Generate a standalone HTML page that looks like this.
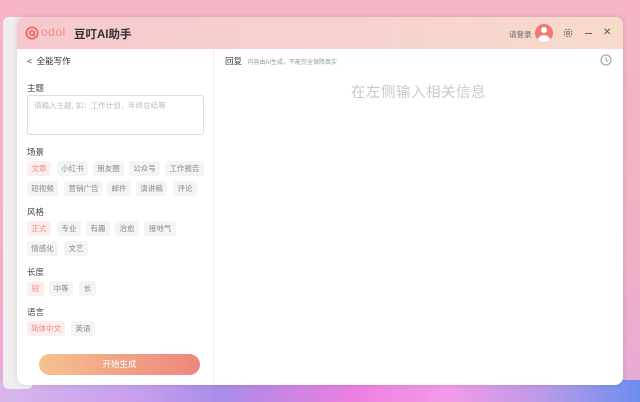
<!DOCTYPE html>
<html><head><meta charset="utf-8"><style>
*{margin:0;padding:0;box-sizing:border-box}
body{width:640px;height:402px;overflow:hidden;position:relative;font-family:"Liberation Sans","Noto Sans CJK SC",sans-serif;background:linear-gradient(180deg,#f6b4c6 0%,#f2b0c4 60%,#e7a9d8 100%)}
.wall{position:absolute;left:0;top:380px;width:640px;height:22px;background:linear-gradient(90deg,#d9b7ec 0%,#c9a0ee 20%,#a98ce8 35%,#ec7fe0 55%,#f39be8 70%,#b99ae8 85%,#6b8ef0 100%)}
.back{position:absolute;left:3px;top:17px;width:30px;height:372px;background:#f1eeef;border-radius:6px}
.win{position:absolute;left:17px;top:17px;width:606px;height:368px;background:#fff;border-radius:8px;overflow:hidden;box-shadow:0 0 6px rgba(0,0,0,.12)}
.tb{height:32px;background:linear-gradient(90deg,#f6c8ce,#f6d3cf 60%,#f7dbc9);position:relative}
.a{position:absolute}
.left{position:absolute;left:0;top:32px;width:197px;bottom:0;border-right:1px solid #eee}
.lbl{position:absolute;left:10px;font-size:8.5px;color:#444}
.tag{position:absolute;height:15px;line-height:15px;font-size:7.5px;color:#888;background:#f4f4f4;border-radius:3px;text-align:center}
.on{background:#fdeeee;color:#f08a8a}
</style></head><body>
<div class="wall"></div>
<div class="back"></div>
<div class="win">
 <div class="tb">
  <svg class="a" style="left:8px;top:9px" width="14" height="14" viewBox="0 0 16 16"><circle cx="8" cy="8" r="6.5" fill="none" stroke="#ee6a5e" stroke-width="2"/><circle cx="8" cy="8" r="2.5" fill="none" stroke="#ee6a5e" stroke-width="1.8"/><path d="M10.5 6v6" stroke="#ee6a5e" stroke-width="1.8"/></svg>
  <div class="a" style="left:24px;top:8px;font-size:12px;color:#ef8a80;letter-spacing:.5px">odol</div>
  <div class="a" style="left:57px;top:9px;font-size:11.5px;font-weight:bold;color:#333">豆叮AI助手</div>
  <div class="a" style="left:492px;top:12px;font-size:7.5px;color:#666">请登录</div>
  <div class="a" style="left:518px;top:7px;width:18px;height:18px;border-radius:50%;background:#ee7a74;overflow:hidden"><div class="a" style="left:6px;top:3px;width:6px;height:6px;border-radius:50%;background:#fff"></div><div class="a" style="left:3px;top:11px;width:12px;height:10px;border-radius:50%;background:#fff"></div></div>
  <svg class="a" style="left:546px;top:11px" width="10" height="10" viewBox="0 0 10 10"><circle cx="5" cy="5" r="3.8" fill="none" stroke="#777" stroke-width="1" stroke-dasharray="2 1"/><circle cx="5" cy="5" r="1.5" fill="none" stroke="#777" stroke-width="1"/></svg>
  <div class="a" style="left:568px;top:16px;width:7px;height:1px;background:#666"></div>
  <div class="a" style="left:586px;top:10px;font-size:10px;color:#555">✕</div>
 </div>
 <div class="left">
  <div class="a" style="left:10px;top:6px;font-size:8.5px;color:#333">&lt;&nbsp;&nbsp;全能写作</div>
  <div class="lbl" style="top:33px">主题</div>
  <div class="a" style="left:10px;top:46px;width:177px;height:40px;border:1px solid #ddd;border-radius:3px"><div style="font-size:7.5px;color:#bbb;margin:4px 6px">请输入主题, 如：工作计划、年终总结等</div></div>
  <div class="lbl" style="top:97px">场景</div>
  <div class="tag on" style="left:10px;top:112px;width:24px">文章</div>
  <div class="tag" style="left:40px;top:112px;width:31px">小红书</div>
  <div class="tag" style="left:76px;top:112px;width:31px">朋友圈</div>
  <div class="tag" style="left:112px;top:112px;width:31px">公众号</div>
  <div class="tag" style="left:148px;top:112px;width:39px">工作报告</div>
  <div class="tag" style="left:10px;top:132px;width:31px">短视频</div>
  <div class="tag" style="left:47px;top:132px;width:39px">营销广告</div>
  <div class="tag" style="left:90px;top:132px;width:24px">邮件</div>
  <div class="tag" style="left:119px;top:132px;width:31px">演讲稿</div>
  <div class="tag" style="left:156px;top:132px;width:24px">评论</div>
  <div class="lbl" style="top:157px">风格</div>
  <div class="tag on" style="left:10px;top:172px;width:24px">正式</div>
  <div class="tag" style="left:40px;top:172px;width:24px">专业</div>
  <div class="tag" style="left:69px;top:172px;width:24px">有趣</div>
  <div class="tag" style="left:98px;top:172px;width:24px">治愈</div>
  <div class="tag" style="left:127px;top:172px;width:32px">接地气</div>
  <div class="tag" style="left:10px;top:192px;width:31px">情感化</div>
  <div class="tag" style="left:47px;top:192px;width:24px">文艺</div>
  <div class="lbl" style="top:217px">长度</div>
  <div class="tag on" style="left:10px;top:232px;width:17px">短</div>
  <div class="tag" style="left:32px;top:232px;width:24px">中等</div>
  <div class="tag" style="left:62px;top:232px;width:17px">长</div>
  <div class="lbl" style="top:257px">语言</div>
  <div class="tag on" style="left:10px;top:272px;width:38px">简体中文</div>
  <div class="tag" style="left:54px;top:272px;width:24px">英语</div>
  <div class="a" style="left:22px;top:305px;width:161px;height:21px;border-radius:11px;background:linear-gradient(90deg,#f5c390,#f09c84 60%,#ee877b);color:#fff;font-size:8.5px;text-align:center;line-height:21px">开始生成</div>
 </div>
 <div class="a" style="left:208px;top:38px;font-size:8.5px;color:#444">回复 <span style="font-size:6px;color:#999;margin-left:3px">内容由AI生成，不能完全保障真实</span></div>
 <svg class="a" style="left:583px;top:37px" width="12" height="12" viewBox="0 0 12 12"><circle cx="6" cy="6" r="5" fill="none" stroke="#999" stroke-width="1"/><path d="M6 3v3l2 1.5" fill="none" stroke="#999" stroke-width="1"/></svg>
 <div class="a" style="left:334px;top:64px;font-size:14.5px;color:#c9c9c9;letter-spacing:.5px">在左侧输入相关信息</div>
</div>
</body></html>
